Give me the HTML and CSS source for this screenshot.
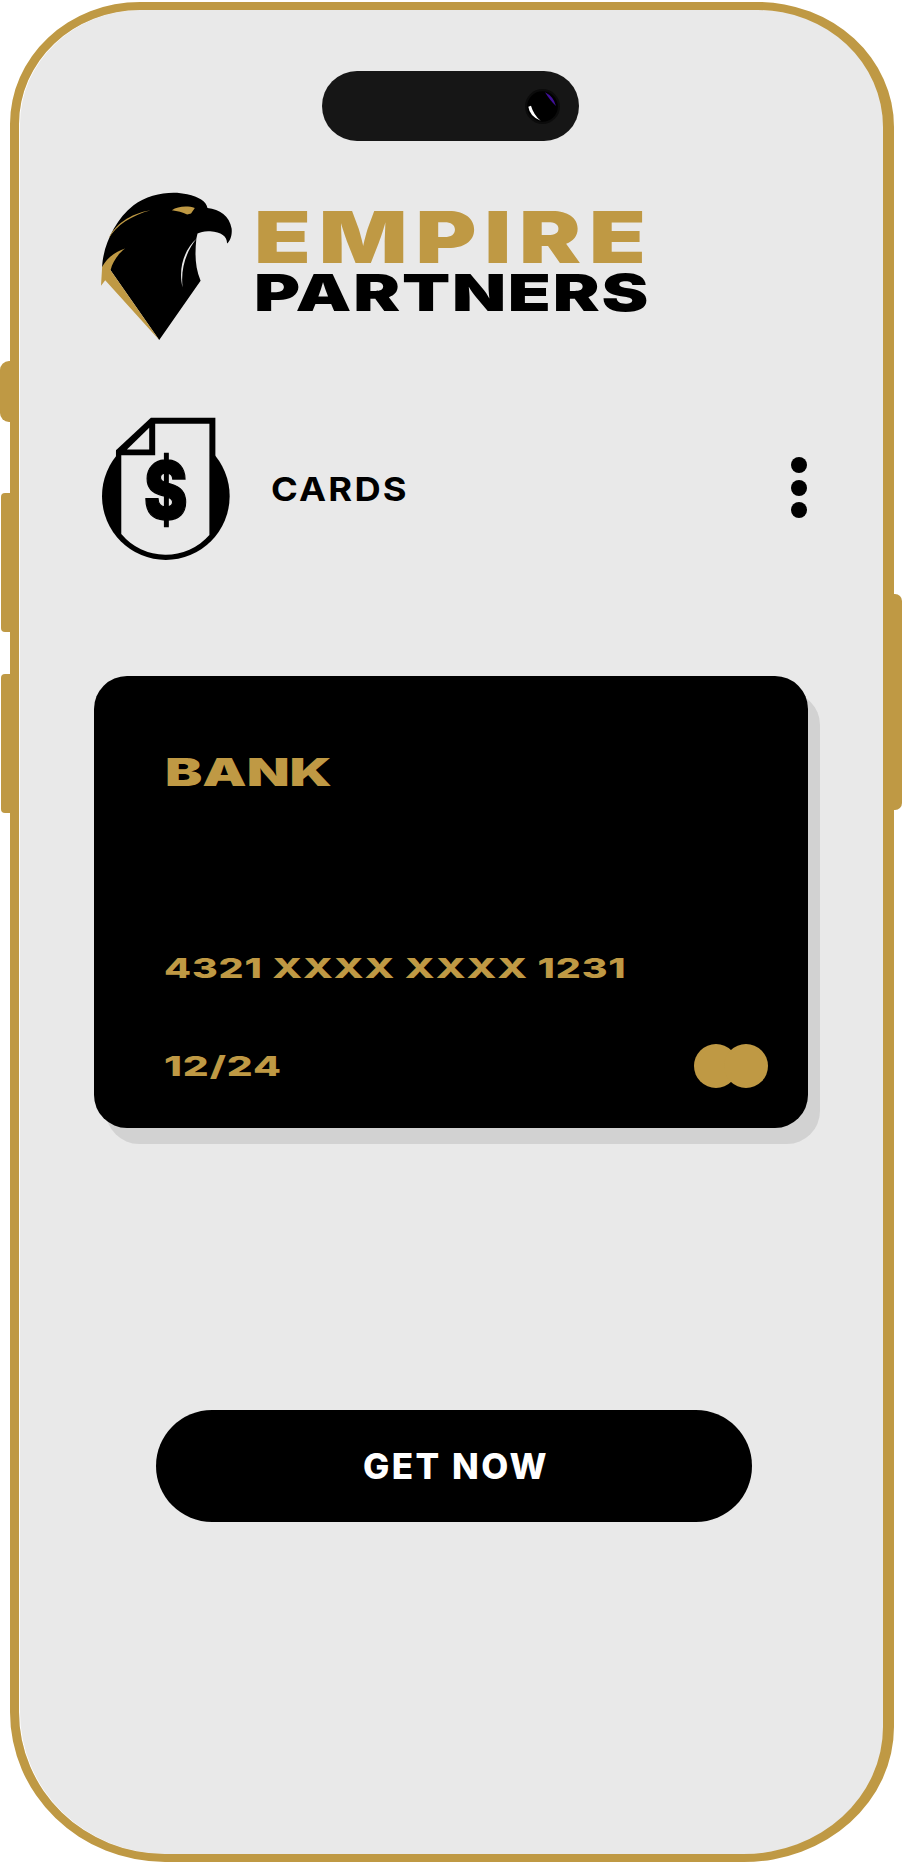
FILE: index.html
```html
<!doctype html>
<html>
<head>
<meta charset="utf-8">
<title>Empire Partners - Cards</title>
<link rel="stylesheet" href="styles.css">
</head>

<body>
<div class="device">
	<span class="side side-mute"></span>
	<span class="side side-up"></span>
	<span class="side side-down"></span>
	<span class="side side-power"></span>

	<div class="phone">
		<div class="notch">
			<svg class="camera" viewBox="0 0 105 105">
				<circle cx="52.5" cy="52.5" r="52.5" fill="#0b0b0b"/>
				<circle cx="52.5" cy="52.5" r="46" fill="#000"/>
				<path d="M10 53Q14 82 47 95Q26 78 18 50Z" fill="#fff"/>
				<path d="M60 10Q85 22 93 51Q76 36 60 10Z" fill="#41109a"/>
			</svg>
		</div>

		<div class="logo">
			<svg class="eagle" viewBox="55 65 342 445" preserveAspectRatio="none">
				<path d="M207 510L80 300L58 290C60 230 90 150 140 105C180 70 240 60 280 72C310 80 330 92 333 113C365 118 390 135 396 175C398 195 392 212 384 220C385 200 370 185 340 183C325 182 315 185 307 190L304 205C300 250 300 290 315 332Z" fill="#000"/>
				<path d="M305 205C275 235 255 290 268 352C262 290 280 240 305 205Z" fill="#e9e9e9"/>
				<path d="M240 120C255 108 280 106 300 113L290 130L280 133C268 126 255 122 240 120Z" fill="#bf9944"/>
				<path d="M75 205C90 165 130 130 185 120C135 135 95 165 75 205Z" fill="#bf9944"/>
				<path d="M118 235C90 245 70 265 58 290L55 347L66 330L207 510L80 300C85 275 100 250 118 235Z" fill="#bf9944"/>
			</svg>
			<div class="logo-text">
				<div class="wide logo-top">EMPIRE</div>
				<div class="wide logo-bottom">PARTNERS</div>
			</div>
		</div>

		<div class="title-row">
			<svg class="doc-icon" viewBox="65 50 385 430">
				<circle cx="257" cy="288" r="192" fill="#000"/>
				<path d="M107 150L212 52H406V290H107Z" fill="#000"/>
				<path d="M225 70H388V405A175 175 0 0 1 123 402V165H225Z" fill="#e9e9e9"/>
				<path d="M140 148L207 82V148Z" fill="#e9e9e9"/>
				<text class="doc-dollar" transform="translate(257 358) scale(.82 1)" text-anchor="middle">$</text>
			</svg>
			<div class="title">CARDS</div>
			<div class="dots"><i></i><i></i><i></i></div>
		</div>

		<div class="card">
			<div class="wide card-bank">BANK</div>
			<div class="wide card-number">4321 XXXX XXXX 1231</div>
			<div class="card-bottom">
				<div class="wide card-date">12/24</div>
				<div class="card-mark"><i></i><i></i></div>
			</div>
		</div>

		<div class="btn">GET NOW</div>
	</div>
</div>
</body>
</html>
```

FILE: styles.css
```css
*{margin:0;padding:0;box-sizing:border-box;}
body{background:#fff;font-family:"Inter","Liberation Sans",sans-serif;}

.device{position:relative;width:904px;height:1862px;overflow:hidden;padding:2px 0 0 10px;}
.side{position:absolute;background:#bf9944;}
.side-mute{left:0;top:361px;width:12px;height:61px;border-radius:9px 0 0 9px;}
.side-up{left:1px;top:493px;width:11px;height:139px;border-radius:4px 0 0 4px;}
.side-down{left:1px;top:674px;width:11px;height:139px;border-radius:4px 0 0 4px;}
.side-power{left:890px;top:594px;width:12px;height:216px;border-radius:0 7px 7px 0;}

.phone{position:relative;width:884px;height:1860px;border:solid #bf9944;border-width:8px 11px 8px 9px;border-radius:130px 136px 150px 155px/122px 125px 135px 150px;background:#e9e9e9;box-shadow:inset 1px 0 0 #fff;}

.notch{display:flex;align-items:center;justify-content:flex-end;width:257px;height:70px;margin:61px 0 0 303px;padding-right:19px;border-radius:35px;background:#161616;}
.camera{display:block;width:35px;height:35px;}

.wide{white-space:nowrap;font-weight:800;transform-origin:0 0;}

.logo{display:flex;margin:51px 0 0 82px;}
.eagle{display:block;width:131px;height:148px;}
.logo-text{margin-left:22px;padding-top:19px;}
.logo-top{height:52px;font-size:71.5px;font-weight:900;line-height:52px;letter-spacing:6px;color:#bf9944;transform:scaleX(1.3);}
.logo-bottom{height:37px;margin-top:11px;font-size:51px;font-weight:900;line-height:37px;letter-spacing:1.25px;color:#000;transform:scaleX(1.38);}

.title-row{display:flex;align-items:center;margin:77px 76px 0 83px;}
.doc-icon{display:block;width:128px;height:143px;}
.doc-dollar{font-size:240px;font-weight:900;fill:#000;stroke:#000;stroke-width:4px;}
.title{margin-left:41px;font-size:33px;font-weight:700;letter-spacing:2px;color:#000;transform:scaleX(1.1);transform-origin:0 0;}
.dots{display:flex;flex-direction:column;gap:6.5px;margin:-2px 0 0 auto;}
.dots i{display:block;width:16px;height:16px;border-radius:50%;background:#000;}

.card{width:714px;height:452px;margin:116px 0 0 75px;padding:82px 40px 0 70px;border-radius:33px;background:#000;box-shadow:12px 16px 0 #d2d2d2;}
.card-bank{height:28px;margin-left:1px;font-size:38.5px;font-weight:900;line-height:28px;color:#bf9944;transform:scaleX(1.45);}
.card-number{height:20px;margin-top:172px;font-size:27.5px;line-height:20px;letter-spacing:.6px;color:#bf9944;transform:scaleX(1.43);}
.card-bottom{display:flex;align-items:center;justify-content:space-between;margin-top:66px;}
.card-date{font-size:27.5px;line-height:20px;letter-spacing:.6px;color:#bf9944;transform:scaleX(1.48);}
.card-mark{display:flex;}
.card-mark i{display:block;width:44px;height:44px;border-radius:50%;background:#bf9944;}
.card-mark i+i{margin-left:-14px;}

.btn{width:596px;height:112px;margin:282px 0 0 137px;padding-left:4px;border-radius:56px;background:#000;color:#fff;font-size:35px;font-weight:800;letter-spacing:2.5px;line-height:112px;text-align:center;}
```
